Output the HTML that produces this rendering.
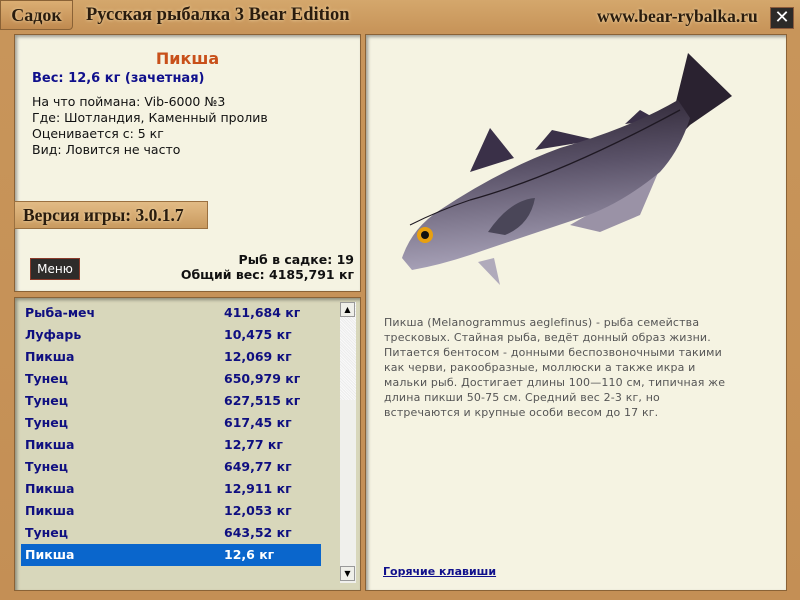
<!DOCTYPE html>
<html><head><meta charset="utf-8"><style>
body{margin:0;width:800px;height:600px;overflow:hidden;background:#c9975c;font-family:"DejaVu Sans","Liberation Sans",sans-serif;position:relative}
.wood{position:absolute;inset:0;background:linear-gradient(180deg,#d4a76c 0,#c8955a 30px,#c48f55 100%)}
.p{position:absolute;background:#f5f3e2;box-shadow:inset 2px 2px 3px rgba(0,0,0,.35);border:1px solid #8a6236}
.ser{font-family:"Liberation Serif","DejaVu Serif",serif;font-weight:bold;color:#2a1c0e;text-shadow:0 0 3px #f3dcae}
.t{position:absolute;white-space:nowrap}
.row{position:absolute;left:21px;width:300px;height:22px;font-weight:bold;font-size:12.5px;color:#0f0f80;line-height:22px}
.row span{position:absolute;left:4px}.row b{position:absolute;left:203px}
</style></head><body>
<div class="wood"></div>
<div class="t ser" style="left:0;top:0;width:71px;height:28px;background:linear-gradient(#dcae73,#c08a50);border:1px solid #8a6236;border-radius:0 0 4px 0;font-size:18px;line-height:28px;text-align:center">Садок</div>
<div class="t ser" style="left:86px;top:5px;font-size:18.5px">Русская рыбалка 3 Bear Edition</div>
<div class="t ser" style="left:597px;top:6px;font-size:17.5px">www.bear-rybalka.ru</div>
<div class="t" style="left:770px;top:7px;width:22px;height:20px;background:#2c2a28;border:1px solid #8a5a3a;color:#fff;font-size:18px;line-height:20px;text-align:center">✕</div>

<div class="p" style="left:14px;top:34px;width:345px;height:256px"></div>
<div class="t" style="left:15px;top:49px;width:345px;text-align:center;font-weight:bold;font-size:16px;color:#c8501a">Пикша</div>
<div class="t" style="left:32px;top:71px;font-weight:bold;font-size:13px;color:#10108c">Вес: 12,6 кг (зачетная)</div>
<div class="t" style="left:32px;top:94px;font-size:12.5px;line-height:16px;color:#111">На что поймана: Vib-6000 №3<br>Где: Шотландия, Каменный пролив<br>Оценивается с: 5 кг<br>Вид: Ловится не часто</div>
<div class="t ser" style="left:14px;top:201px;width:194px;height:28px;background:linear-gradient(#e2bb85,#c99a5f);border:1px solid #9a7040;font-size:17.5px;line-height:27px;padding-left:8px;box-sizing:border-box">Версия игры: 3.0.1.7</div>
<div class="t" style="left:30px;top:258px;width:48px;height:20px;background:#2e2c2a;border:1px solid #8a3a2a;color:#fff;font-size:12px;line-height:20px;text-align:center">Меню</div>
<div class="t" style="left:150px;top:252px;width:204px;text-align:right;font-weight:bold;font-size:12.5px;line-height:15px;color:#111">Рыб в садке: 19<br>Общий вес: 4185,791 кг</div>

<div class="p" style="left:14px;top:297px;width:345px;height:292px;background:#d8d7bb"></div>
<div class="t" style="left:340px;top:302px;width:16px;height:281px;background:#f0f0ec"></div>
<div class="t" style="left:340px;top:302px;width:16px;height:98px;background:repeating-linear-gradient(45deg,#fafafa 0 1px,#ececec 1px 2px)"></div>
<div class="t" style="left:340px;top:302px;width:15px;height:15px;background:#efefe9;border:1px solid #999;box-sizing:border-box;font-size:8px;text-align:center;line-height:14px">▲</div>
<div class="t" style="left:340px;top:566px;width:15px;height:15px;background:#efefe9;border:1px solid #999;box-sizing:border-box;font-size:8px;text-align:center;line-height:14px">▼</div>
<div class="row" style="top:302px"><span>Рыба-меч</span><b>411,684 кг</b></div>
<div class="row" style="top:324px"><span>Луфарь</span><b>10,475 кг</b></div>
<div class="row" style="top:346px"><span>Пикша</span><b>12,069 кг</b></div>
<div class="row" style="top:368px"><span>Тунец</span><b>650,979 кг</b></div>
<div class="row" style="top:390px"><span>Тунец</span><b>627,515 кг</b></div>
<div class="row" style="top:412px"><span>Тунец</span><b>617,45 кг</b></div>
<div class="row" style="top:434px"><span>Пикша</span><b>12,77 кг</b></div>
<div class="row" style="top:456px"><span>Тунец</span><b>649,77 кг</b></div>
<div class="row" style="top:478px"><span>Пикша</span><b>12,911 кг</b></div>
<div class="row" style="top:500px"><span>Пикша</span><b>12,053 кг</b></div>
<div class="row" style="top:522px"><span>Тунец</span><b>643,52 кг</b></div>
<div class="row" style="top:544px;background:#0a66cc;color:#fff"><span>Пикша</span><b>12,6 кг</b></div>

<div class="p" style="left:365px;top:34px;width:420px;height:555px"></div>
<svg class="t" style="left:380px;top:50px" width="360" height="240" viewBox="380 50 360 240">
<defs><linearGradient id="g" x1="0" y1="0" x2="0.15" y2="1"><stop offset="0" stop-color="#251d2a"/><stop offset=".45" stop-color="#5a5268"/><stop offset="1" stop-color="#a8a2b8"/></linearGradient></defs>
<path d="M470 172 L490 128 L514 158 Z" fill="#3a3048"/>
<path d="M535 150 L552 130 L596 140 Z" fill="#3a3048"/>
<path d="M625 124 L640 110 L658 120 Z" fill="#3a3048"/>
<path d="M570 225 L640 185 L672 140 L640 215 L600 232 Z" fill="#9a92a6"/>
<path d="M672 118 L688 53 L732 96 L690 125 L676 140 Z" fill="#2a2230"/>
<path d="M402 258 Q412 228 440 210 Q500 170 560 148 Q630 128 678 100 L690 118 Q680 150 660 172 Q620 205 580 218 Q520 238 470 255 Q440 265 412 270 Z" fill="url(#g)"/>
<path d="M410 225 Q440 210 470 200" stroke="#1e1822" stroke-width="1" fill="none"/>
<path d="M470 200 Q560 175 680 110" stroke="#1e1822" stroke-width="1.3" fill="none"/>
<path d="M478 262 L500 285 L494 258 Z" fill="#b0aabb"/>
<path d="M488 232 Q510 200 535 198 Q530 225 505 235 Z" fill="#4a4658"/>
<circle cx="425" cy="235" r="8" fill="#e8a010"/><circle cx="425" cy="235" r="4" fill="#111"/>
</svg>
<div class="t" style="left:384px;top:315px;font-size:11px;line-height:15px;color:#555;letter-spacing:.15px">Пикша (Melanogrammus aeglefinus) - рыба семейства<br>тресковых. Стайная рыба, ведёт донный образ жизни.<br>Питается бентосом - донными беспозвоночными такими<br>как черви, ракообразные, моллюски а также икра и<br>мальки рыб. Достигает длины 100—110 см, типичная же<br>длина пикши 50-75 см. Средний вес 2-3 кг, но<br>встречаются и крупные особи весом до 17 кг.</div>
<div class="t" style="left:383px;top:565px;font-size:11px;font-weight:bold;color:#10108c;text-decoration:underline">Горячие клавиши</div>
</body></html>
